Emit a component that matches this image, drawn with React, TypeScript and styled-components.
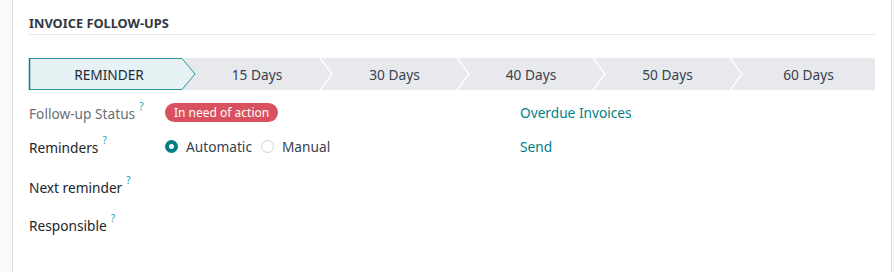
import React from "react";
import styled, { createGlobalStyle } from "styled-components";

const GlobalStyle = createGlobalStyle`
  html, body { margin: 0; padding: 0; }
  body {
    background: #f8f9fa;
    font-family: "Noto Sans", "Open Sans", sans-serif;
    color: #212529;
  }
`;

const Sheet = styled.div`
  box-sizing: border-box;
  margin-left: 12px;
  width: 880px;
  height: 272px;
  background: #ffffff;
  border-left: 1px solid #d8dadd;
  border-right: 1px solid #d8dadd;
  padding: 0 16px;
`;

const Title = styled.div`
  font-size: 12.8px;
  font-weight: 700;
  color: #2f3742;
  padding-top: 13px;
  height: 21px;
  line-height: 20px;
  border-bottom: 1px solid #e5e7eb;
`;

const StatusBar = styled.div`
  margin-top: 23px;
  display: flex;
  height: 32px;
  background: #e7e9ed;
`;

const Stage = styled.div<{ $w: number; $active?: boolean }>`
  position: relative;
  box-sizing: border-box;
  flex: 0 0 ${(p) => p.$w}px;
  display: flex;
  align-items: center;
  justify-content: center;
  padding-left: ${(p) => (p.$active ? 7 : 12)}px;
  font-size: 13.7px;
  color: ${(p) => (p.$active ? "#1f2937" : "#374151")};
  z-index: ${(p) => (p.$active ? 2 : 1)};
`;

const StageLabel = styled.span`
  position: relative;
  z-index: 1;
`;

const ActiveShape = styled.svg`
  position: absolute;
  left: 0;
  top: 0;
  overflow: visible;
`;

const Chevron = styled.svg`
  position: absolute;
  left: 0;
  top: 0;
`;

const Rows = styled.div`
  margin-top: 8px;
  display: flex;
  flex-direction: column;
`;

const Row = styled.div<{ $h: number }>`
  display: grid;
  grid-template-columns: 136px 355px 1fr;
  align-items: center;
  height: ${(p) => p.$h}px;
  font-size: 13.7px;
`;

const Label = styled.div<{ $muted?: boolean }>`
  color: ${(p) => (p.$muted ? "#6b6f74" : "#212529")};
  white-space: nowrap;
`;

const Help = styled.sup`
  color: #17a2b8;
  font-size: 10px;
  margin-left: 4px;
  position: relative;
  top: -3px;
`;

const Badge = styled.span`
  display: inline-flex;
  align-items: center;
  height: 19px;
  padding: 0 9px;
  border-radius: 10px;
  background: #d9505e;
  color: #ffffff;
  font-size: 12px;
`;

const Cell = styled.div`
  display: flex;
  align-items: center;
`;

const RadioOption = styled.label`
  display: inline-flex;
  align-items: center;
  gap: 8px;
  margin-right: 9px;
  color: #374151;
`;

const RadioDot = styled.span<{ $checked?: boolean }>`
  box-sizing: border-box;
  width: 13px;
  height: 13px;
  border-radius: 50%;
  background: #ffffff;
  border: ${(p) => (p.$checked ? "4px solid #017e84" : "1px solid #ced4da")};
`;

const Link = styled.a`
  color: #017e84;
  text-decoration: none;
`;

const stages = [
  { label: "REMINDER", w: 153, active: true },
  { label: "15 Days", w: 138 },
  { label: "30 Days", w: 137 },
  { label: "40 Days", w: 136 },
  { label: "50 Days", w: 137 },
  { label: "60 Days", w: 145 },
];

export default function App() {
  return (
    <>
      <GlobalStyle />
      <Sheet>
        <Title>INVOICE FOLLOW-UPS</Title>
        <StatusBar>
          {stages.map((s, i) => (
            <Stage key={s.label} $w={s.w} $active={s.active}>
              {s.active ? (
                <ActiveShape width={167} height={32}>
                  <polygon
                    points="0.5,0.5 153,0.5 166,16 153,31.5 0.5,31.5"
                    fill="#e6f2f3"
                    stroke="#2a9599"
                    strokeWidth="1"
                  />
                  <line x1="0.5" y1="0" x2="0.5" y2="32" stroke="#017e84" strokeWidth="1.5" />
                </ActiveShape>
              ) : i > 1 ? (
                <Chevron width={14} height={32}>
                  <polyline
                    points="0,0 12,16 0,32"
                    fill="none"
                    stroke="#ffffff"
                    strokeWidth="1.3"
                  />
                </Chevron>
              ) : null}
              <StageLabel>{s.label}</StageLabel>
            </Stage>
          ))}
        </StatusBar>
        <Rows>
          <Row $h={28}>
            <Label $muted>
              Follow-up Status<Help>?</Help>
            </Label>
            <Cell>
              <Badge>In need of action</Badge>
            </Cell>
            <Cell>
              <Link href="#">Overdue Invoices</Link>
            </Cell>
          </Row>
          <Row $h={40}>
            <Label>
              Reminders<Help>?</Help>
            </Label>
            <Cell>
              <RadioOption>
                <RadioDot $checked />
                Automatic
              </RadioOption>
              <RadioOption>
                <RadioDot />
                Manual
              </RadioOption>
            </Cell>
            <Cell>
              <Link href="#">Send</Link>
            </Cell>
          </Row>
          <Row $h={40}>
            <Label>
              Next reminder<Help>?</Help>
            </Label>
            <Cell />
            <Cell />
          </Row>
          <Row $h={36}>
            <Label>
              Responsible<Help>?</Help>
            </Label>
            <Cell />
            <Cell />
          </Row>
        </Rows>
      </Sheet>
    </>
  );
}
